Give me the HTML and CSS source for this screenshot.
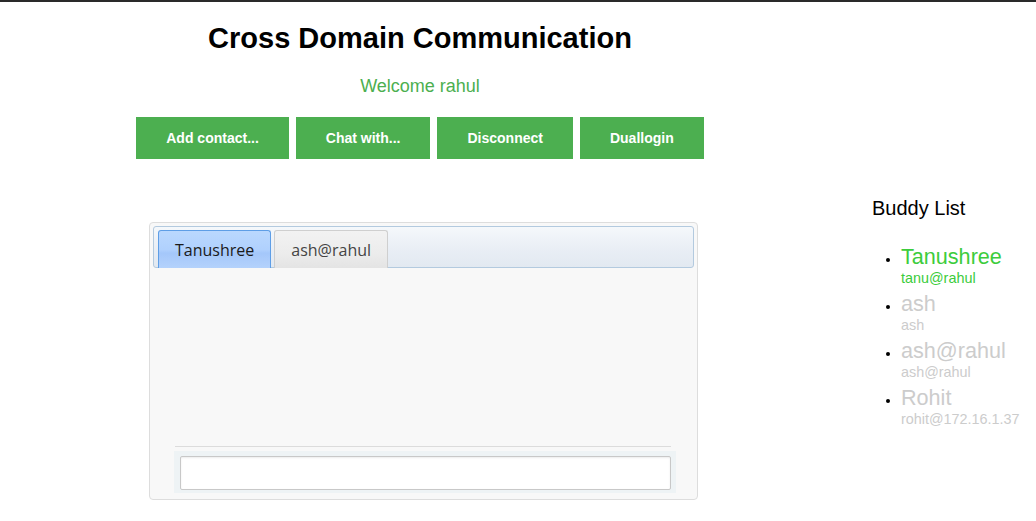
FILE: index.html
```html
<!DOCTYPE html>
<html>
<head>
<meta charset="utf-8">
<link rel="stylesheet" href="styles.css">
</head>
<body>
<div class="page">
  <div class="main">
    <h1 class="title">Cross Domain Communication</h1>
    <div class="welcome">Welcome rahul</div>
    <div class="actions">
      <button class="btn">Add contact...</button>
      <button class="btn">Chat with...</button>
      <button class="btn">Disconnect</button>
      <button class="btn">Duallogin</button>
    </div>
    <div class="chatbox">
      <div class="tabbar">
        <div class="tab tab-active">Tanushree</div>
        <div class="tab">ash@rahul</div>
      </div>
      <div class="messages"></div>
      <div class="divider"></div>
      <div class="compose">
        <input class="compose-input" type="text">
      </div>
    </div>
  </div>
  <div class="sidebar">
    <div class="buddy-title">Buddy List</div>
    <ul class="buddies">
      <li class="buddy online"><span class="buddy-name">Tanushree</span><span class="buddy-jid">tanu@rahul</span></li>
      <li class="buddy"><span class="buddy-name">ash</span><span class="buddy-jid">ash</span></li>
      <li class="buddy"><span class="buddy-name">ash@rahul</span><span class="buddy-jid">ash@rahul</span></li>
      <li class="buddy"><span class="buddy-name">Rohit</span><span class="buddy-jid">rohit@172.16.1.37</span></li>
    </ul>
  </div>
</div>
</body>
</html>
```

FILE: styles.css
```css
html, body {
  margin: 0;
  padding: 0;
  background: #fff;
}
body {
  border-top: 2px solid #2a2a2a;
  font-family: "Liberation Sans", Arial, sans-serif;
  color: #000;
}
.page {
  display: flex;
  align-items: flex-start;
}
.main {
  width: 840px;
  flex: none;
}
.title {
  margin: 20px 0 0;
  font-size: 29px;
  line-height: 32px;
  font-weight: bold;
  text-align: center;
}
.welcome {
  margin-top: 21px;
  text-align: center;
  font-size: 18px;
  line-height: 22px;
  color: #4caf50;
}
.actions {
  margin-top: 20px;
  display: flex;
  justify-content: center;
  gap: 7px;
}
.btn {
  height: 42px;
  padding: 0 30px;
  border: none;
  background: #4caf50;
  color: #fff;
  font-family: "Liberation Sans", Arial, sans-serif;
  font-weight: bold;
  font-size: 14px;
}
.chatbox {
  margin: 63px 0 0 149px;
  width: 549px;
  height: 278px;
  box-sizing: border-box;
  border: 1px solid #dddddd;
  border-radius: 4px;
  background: #f8f8f8;
  padding: 3px 3px 6px;
  display: flex;
  flex-direction: column;
}
.tabbar {
  height: 42px;
  box-sizing: border-box;
  border: 1px solid #b3cadf;
  border-radius: 3px;
  background: linear-gradient(#f5f8fb, #e9eef5 55%, #e2e9f1);
  padding: 3px 4px 0;
  display: flex;
  gap: 3px;
  align-items: stretch;
}
.tab {
  box-sizing: border-box;
  padding: 0 16px;
  border: 1px solid #cfcfcf;
  border-bottom: none;
  border-radius: 3px 3px 0 0;
  background: linear-gradient(#f2f2f2, #ececec 60%, #e4e4e4);
  font-family: "Open Sans", "DejaVu Sans", sans-serif;
  font-size: 16px;
  color: #444;
  display: flex;
  align-items: center;
  height: 38px;
}
.tab-active {
  border-color: #5e9ee6;
  background: linear-gradient(#bad8fe, #b0d1fd 50%, #a4c7fa 60%, #b4d2fc);
  color: #1a1a1a;
}
.messages {
  flex: none;
  height: 178px;
}
.divider {
  height: 1px;
  background: #dcdcdc;
  margin-left: 22px;
  width: 496px;
}
.compose {
  margin: 4px 0 0 21px;
  width: 502px;
  height: 42px;
  box-sizing: border-box;
  background: #eef3f5;
  padding: 5px 5px 4px 6px;
}
.compose-input {
  display: block;
  width: 491px;
  height: 34px;
  box-sizing: border-box;
  margin: 0;
  border: 1px solid #c8c8c8;
  border-radius: 2px;
  box-shadow: inset 0 1px 2px rgba(0,0,0,0.08);
  background: #fff;
  outline: none;
}
.sidebar {
  padding-left: 32px;
  padding-top: 194px;
}
.buddy-title {
  font-size: 20px;
  line-height: 24px;
}
.buddies {
  margin: 25px 0 0;
  padding-left: 29px;
  list-style: disc;
}
.buddy {
  font-size: 14px;
  margin-bottom: 5px;
  color: #cccccc;
}
.buddy::marker {
  color: #000;
}
.buddy-name {
  display: block;
  font-size: 21.6px;
  line-height: 24px;
}
.buddy-jid {
  display: block;
  font-size: 14.4px;
  line-height: 18px;
}
.online {
  color: #3ccc3c;
}
```
